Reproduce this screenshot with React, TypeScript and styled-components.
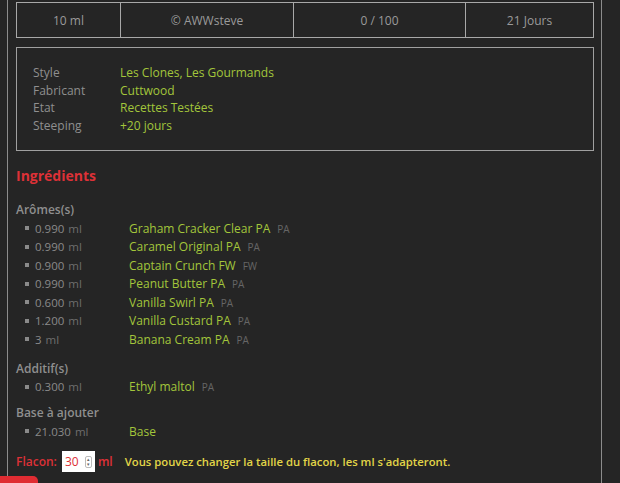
import React from "react";
import styled, { createGlobalStyle } from "styled-components";

const Global = createGlobalStyle`
  html, body { margin: 0; padding: 0; background: #252525; }
  body { font-family: "Open Sans", "Noto Sans", sans-serif; overflow: hidden; }
`;

const Page = styled.div`
  width: 620px;
  height: 483px;
  background: #252525;
  overflow: hidden;
  position: relative;
`;

const Frame = styled.div`
  margin-left: 7px;
  width: 595px;
  min-height: 483px;
  border-left: 1px solid #8c8c8c;
  border-right: 1px solid #8c8c8c;
  padding: 2px 8px 0 8px;
  box-sizing: border-box;
`;

const StatsTable = styled.div`
  display: grid;
  grid-template-columns: 104px 173px 172px 1fr;
  border: 1px solid #a8a8a8;
  height: 36px;
  box-sizing: border-box;
  margin-right: -1px;
`;

const StatCell = styled.div<{ $last?: boolean }>`
  display: flex;
  align-items: center;
  justify-content: center;
  color: #9a9a9a;
  font-size: 12px;
  border-right: ${(p) => (p.$last ? "none" : "1px solid #a8a8a8")};
`;

const InfoBox = styled.div`
  margin-top: 9px;
  margin-right: -1px;
  border: 1px solid #a0a0a0;
  padding: 16px 15px 16px 16px;
  display: grid;
  grid-template-columns: 87px 1fr;
  font-size: 12px;
  line-height: 17.5px;
`;

const InfoLabel = styled.div`
  color: #8f8f8f;
`;

const InfoValue = styled.div`
  color: #a3c63b;
`;

const Heading = styled.h2`
  margin: 15px 0 0 0;
  color: #dd3137;
  font-size: 14px;
  font-weight: 700;
  line-height: 20px;
`;

const GroupLabel = styled.div<{ $gap?: number }>`
  color: #8f8f8f;
  font-size: 12px;
  font-weight: 600;
  line-height: 18px;
  margin-top: ${(p) => p.$gap ?? 0}px;
`;

const List = styled.ul`
  list-style: none;
  margin: 0;
  padding: 0;
`;

const Item = styled.li`
  display: grid;
  grid-template-columns: 113px auto;
  align-items: center;
  height: 18.5px;
  font-size: 11.5px;
`;

const Qty = styled.span`
  display: flex;
  align-items: center;
  color: #8a8a8a;
  padding-left: 9px;
`;

const Bullet = styled.span`
  width: 4px;
  height: 4px;
  background: #8a8a8a;
  margin-right: 6px;
`;

const Unit = styled.span`
  color: #6e6e6e;
  margin-left: 4px;
`;

const Name = styled.span`
  color: #a3c63b;
  font-size: 12px;
`;

const Tag = styled.span`
  color: #666;
  font-size: 10px;
  margin-left: 7px;
`;

const FlaconRow = styled.div`
  margin-top: 10px;
  display: flex;
  align-items: center;
  font-size: 12px;
  font-weight: 600;
  height: 22px;
`;

const FlaconLabel = styled.span`
  color: #dd3137;
`;

const NumberBox = styled.div`
  margin-left: 5px;
  width: 33px;
  height: 21px;
  background: #fff;
  display: flex;
  align-items: center;
  justify-content: space-between;
  padding: 0 3px 0 3px;
  box-sizing: border-box;
  color: #dd3137;
  font-weight: 400;
  font-size: 12px;
`;

const Spinner = styled.div`
  width: 7px;
  height: 12px;
  border: 1px solid #bbb;
  border-radius: 2px;
  display: flex;
  flex-direction: column;
  align-items: center;
  justify-content: space-around;
  box-sizing: border-box;
  font-size: 5px;
  line-height: 5px;
  color: #666;
`;

const Ml = styled.span`
  color: #dd3137;
  margin-left: 3px;
`;

const Hint = styled.span`
  color: #e2d548;
  margin-left: 12px;
  font-size: 11.3px;
`;

const RedTab = styled.div`
  position: absolute;
  left: 0;
  bottom: 0;
  width: 38px;
  height: 7px;
  background: #e02c32;
  border-top-right-radius: 5px;
`;

type Ing = { qty: string; name: string; tag?: string };

const aromes: Ing[] = [
  { qty: "0.990", name: "Graham Cracker Clear PA", tag: "PA" },
  { qty: "0.990", name: "Caramel Original PA", tag: "PA" },
  { qty: "0.900", name: "Captain Crunch FW", tag: "FW" },
  { qty: "0.990", name: "Peanut Butter PA", tag: "PA" },
  { qty: "0.600", name: "Vanilla Swirl PA", tag: "PA" },
  { qty: "1.200", name: "Vanilla Custard PA", tag: "PA" },
  { qty: "3", name: "Banana Cream PA", tag: "PA" },
];

const additifs: Ing[] = [{ qty: "0.300", name: "Ethyl maltol", tag: "PA" }];
const base: Ing[] = [{ qty: "21.030", name: "Base" }];

const Ingredients = ({ items }: { items: Ing[] }) => (
  <List>
    {items.map((it, i) => (
      <Item key={i}>
        <Qty>
          <Bullet />
          {it.qty}
          <Unit>ml</Unit>
        </Qty>
        <span>
          <Name>{it.name}</Name>
          {it.tag && <Tag>{it.tag}</Tag>}
        </span>
      </Item>
    ))}
  </List>
);

export default function App() {
  return (
    <Page>
      <Global />
      <Frame>
        <StatsTable>
          <StatCell>10 ml</StatCell>
          <StatCell>© AWWsteve</StatCell>
          <StatCell>0 / 100</StatCell>
          <StatCell $last>21 Jours</StatCell>
        </StatsTable>
        <InfoBox>
          <InfoLabel>Style</InfoLabel>
          <InfoValue>Les Clones, Les Gourmands</InfoValue>
          <InfoLabel>Fabricant</InfoLabel>
          <InfoValue>Cuttwood</InfoValue>
          <InfoLabel>Etat</InfoLabel>
          <InfoValue>Recettes Testées</InfoValue>
          <InfoLabel>Steeping</InfoLabel>
          <InfoValue>+20 jours</InfoValue>
        </InfoBox>
        <Heading>Ingrédients</Heading>
        <GroupLabel $gap={15}>Arômes(s)</GroupLabel>
        <Ingredients items={aromes} />
        <GroupLabel $gap={11}>Additif(s)</GroupLabel>
        <Ingredients items={additifs} />
        <GroupLabel $gap={8}>Base à ajouter</GroupLabel>
        <Ingredients items={base} />
        <FlaconRow>
          <FlaconLabel>Flacon:</FlaconLabel>
          <NumberBox>
            30
            <Spinner>
              <span>▴</span>
              <span>▾</span>
            </Spinner>
          </NumberBox>
          <Ml>ml</Ml>
          <Hint>Vous pouvez changer la taille du flacon, les ml s'adapteront.</Hint>
        </FlaconRow>
      </Frame>
      <RedTab />
    </Page>
  );
}
